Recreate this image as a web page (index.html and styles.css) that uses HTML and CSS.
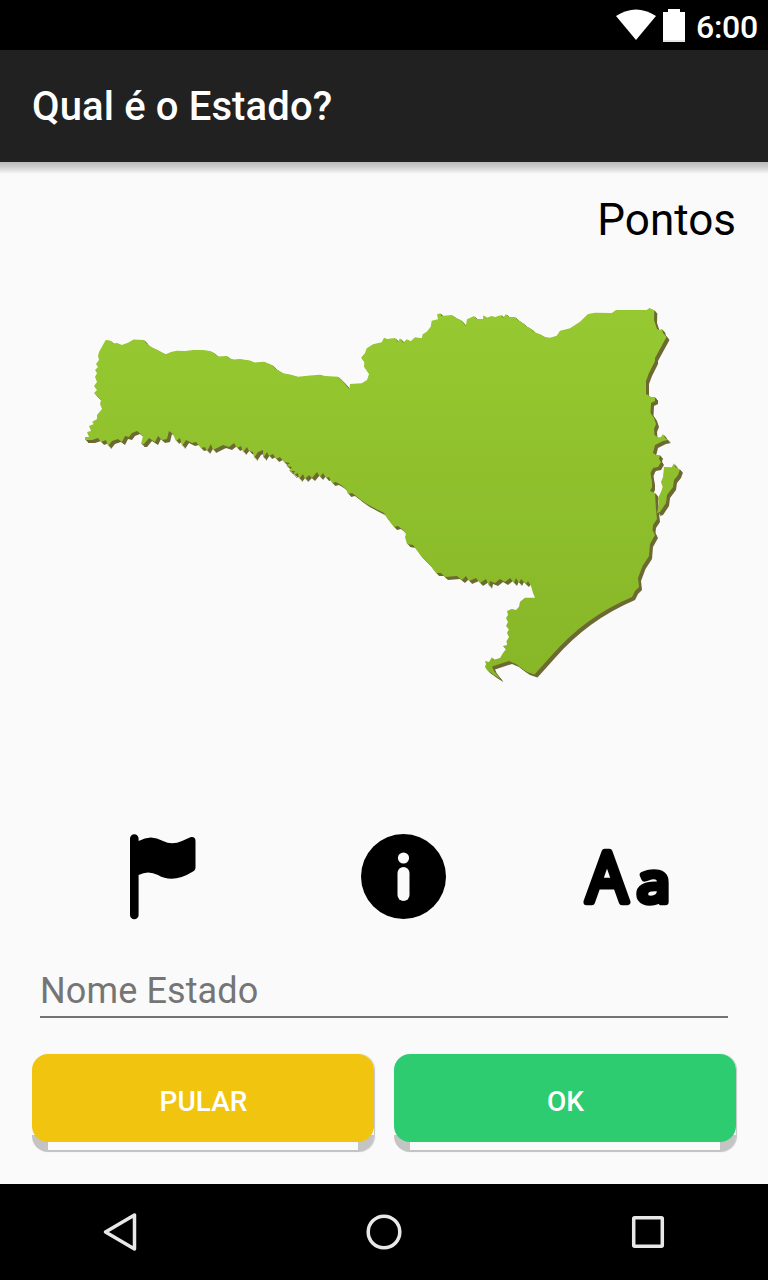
FILE: index.html
```html
<!DOCTYPE html>
<html lang="pt-BR">
<head>
<meta charset="utf-8">
<title>Qual é o Estado?</title>
<link rel="stylesheet" href="styles.css">
</head>
<body>
<div class="status-bar">
  <svg class="wifi" width="40" height="32" viewBox="0 0 40 32"><path fill="#fff" d="M0 7Q20-6 40 7L20 31Z"/></svg>
  <svg class="battery" width="22" height="33" viewBox="0 0 22 33"><path fill="#fff" d="M5 0H17V3H22V33H0V3H5Z"/><path fill="#e4e4e4" d="M0 31H22V33H0Z"/></svg>
  <span class="clock">6:00</span>
</div>
<header class="app-bar"><h1>Qual é o Estado?</h1></header>
<main class="content">
  <div class="score">Pontos</div>
  <svg class="map" width="608" height="380" viewBox="80 304 608 380">
    <defs>
      <linearGradient id="green" gradientUnits="userSpaceOnUse" x1="0" y1="308" x2="0" y2="680">
        <stop offset="0" stop-color="#96c931"/><stop offset="1" stop-color="#87b627"/>
      </linearGradient>
      <g id="state">
        <path d="M105.7 340L110 340.5 113.5 343.5 117 343 121.7 345 128.5 342.5 133.5 339.5 144 340 146 343 150 346.5 158.5 350.5 161 352 165.7 354.3 171 352 176.7 350.7 185 351 193 350 203 350 210 351 214 353 218 356.5 227 356 229 358 233.500 359.500 240 359 250 360.500 254 362.500 264 361.700 267 363 272 365 276 369 283 373.300 290 374.500 298 376.700 310 375.500 320 374.700 325 376 338 376.700 344 382.700 349.300 389.300 350 384 361.700 383.300 367 380 369 374 364 366.700 364.300 361.700 361 357.700 365 353 366.700 348.300 373 344.300 381.700 342.300 384 337.700 387 339 395 338 398 342 400 338.300 403.300 342.700 406.700 339.300 410.700 341.300 415 337.300 421.700 338.300 422.700 334.300 426.700 331.700 430.700 326.700 431.700 320.700 438 319.300 437 314.300 440.700 313.300 441 316 451.700 315 456.700 318.300 460.700 320 465.700 326 467 319.300 474 316 476.700 319 483 319 483.300 315.300 486.700 317.700 491.700 316 495 317 501.700 315 503 318 506 314 509 317 515 317 518 320 523 323.300 526 326 531.700 329.300 534 332 540 334.300 545 337 550 337.700 556.700 335.700 560 330.700 570 328.300 580 321.700 588 314 595 312.700 611.700 313 616 310 646.700 310 649.300 308 654.300 310.300 654 320 657 329 659 330 662 329 663 333 666.500 337 655 358 655 361 649 373 646 381 646 394 651 397 655 397 655 401 651 403 650.500 413 654 418 656 424 654 429 654.500 435 658 437.500 661 437 663 434 665 438 668 440 663 441 655 445 653 453 656 455 660 455 659 459 661 462 658 467 653 468 650.500 473 652 482 652 487 650 491 655 493 656 510 657 519 653 525 652.500 530 655 535 650 544 649 556 642.500 566 638 578 639 587 635 591 632 597Q585 617 552 655L534.500 674.500 527 672 522.500 669 516 664 509 661 492 666.500 494 671 500.700 679.300 494 675 490 672 487 670 485 667 486 664 485 661 489 662 492 657 493 660 500 658 503 653 506 649 502.700 646 507 645 506.500 641 509 637 507 633 509 629 506 626 508 622 506 618 508 615 507 611 511.700 609 516 610 519 606.700 520 601.700 525 597.700 535 597.700 533 593 531 586 528 581 526 584 521 579 519 583 516 578 514 583 510 578 505 582 500 579 495 583 490 581 489 586 486 579 480 583 476 578 469 581 466 576 462 580 457 576 445 577 441 573 436 573 433 569 430 565 424 559 421 556 416.700 550 413 545 407 544 405 537 406 534 403 530 398 526 394 527 387 518 384 513 376 509 366.700 504 361 500 356 496 352 493 348 494 346 489 341 485 336 482 332 483 329 477 326 478 323 473 320 477 317 472 312 478 309 475 305 479 303 474 299 479 298 473 293 475 295 471 289 471 292 467 286 466 290 463 284 462 280 457 276 459 273 454 269 456 267 452 263 458 263 450 258 452 254 458 253 452 249 451 247 447 243 452 241 446 237 448 234 443 229 447 223 445 217 448 213 450 211 444 207 451 205 447 201 448 196 442 192 443 186 440 182 446 180 438 176 441 173 434 169 431 167 439 162 440 158 436 155 442 149 438 144 444 141 444 143 436 137 431 132 433 129 437 125 436 122 442 118 439 112 441 108 446 106 440 101 442 98 438 92 440 85 440 85 437 89 437 87 432 91 431 89 426 94 424 92 422 97 419 97 415 102 409 100 404 101 400 97 396 94 393 97 390 94 386 97 382 95 377 97 373 95 370 98 367 96 364 99 360 98 356 99 352Z"/>
        <path d="M664 467L671.700 467.300 674 463.300 675 467 680 469.500 678 475 674 480 673 487 667 495 666 503 664 506 660 512 657 513 659 504 658 498 661 492 662.700 486.700 661 482 663 477Z"/>
      </g>
    </defs>
    <g fill="#6c6932"><use href="#state" x="1" y="0.700"/><use href="#state" x="2" y="1.700"/><use href="#state" x="3" y="2.900"/></g>
    <path fill="#fafafa" d="M655 472L659 471 662 476 662 482 660 486 656 484 654 479ZM657 488L661 489 659 494Z"/>
    <g fill="url(#green)"><use href="#state"/></g>
  </svg>
  <div class="hints">
    <svg class="flag" width="66" height="86" viewBox="0 0 66 86"><path d="M0 4.500A4.300 4.300 0 0 1 8.600 4.500V7Q21 0 33 7Q42 11.500 52 7L61 3Q65.500 2.500 65.500 7V34Q65.500 36 63 37.500Q43 50 28 41Q18 36 8.600 41V81A4.300 4.300 0 0 1 0 81Z"/></svg>
    <svg class="info" width="86" height="86" viewBox="0 0 86 86"><circle cx="42.500" cy="42.500" r="42.500"/><circle cx="42.500" cy="24" r="5.600" fill="#fafafa"/><rect x="36.500" y="33" width="12" height="34" rx="6" fill="#fafafa"/></svg>
    <svg class="letters" width="106" height="86" viewBox="-10 0 106 86"><text x="3.500" y="67.500" font-size="69" textLength="41" lengthAdjust="spacingAndGlyphs">A</text><text x="54" y="67.500" font-size="55" textLength="33" lengthAdjust="spacingAndGlyphs">a</text></svg>
  </div>
  <input class="name-field" type="text" placeholder="Nome Estado" aria-label="Nome Estado">
  <div class="actions">
    <div class="action"><button class="btn skip">PULAR</button></div>
    <div class="action"><button class="btn ok">OK</button></div>
  </div>
</main>
<nav class="nav-bar">
  <svg width="36" height="40" viewBox="0 0 36 40"><path d="M3.500 20L32.500 3V37Z"/></svg>
  <svg width="36" height="40" viewBox="0 0 36 40"><circle cx="18" cy="20" r="15.800"/></svg>
  <svg width="36" height="40" viewBox="0 0 36 40"><rect x="3.700" y="5.700" width="28.600" height="28.600" rx="1"/></svg>
</nav>
</body>
</html>
```

FILE: styles.css
```css
* { box-sizing: border-box; }
body {
  margin: 0;
  width: 768px;
  height: 1280px;
  display: flex;
  flex-direction: column;
  background: #fafafa;
  font-family: Roboto, sans-serif;
  overflow: hidden;
}
svg { display: block; }
.status-bar {
  height: 50px;
  background: #000;
  display: flex;
  justify-content: flex-end;
  align-items: flex-start;
  padding: 9px 11px 0 0;
}
.battery { margin: 0 11px 0 7px; }
.clock { width: 61px; color: #fff; font-size: 32px; line-height: 37px; font-weight: 500; letter-spacing: -0.3px; }
.app-bar {
  height: 112px;
  background: #212121;
  display: flex;
  align-items: center;
  padding: 2px 0 0 32px;
}
.app-bar h1 { margin: 0; color: #fff; font-size: 40px; line-height: 48px; font-weight: 500; letter-spacing: 0.13px; }
.content {
  flex: 1;
  display: flex;
  flex-direction: column;
  padding: 32px 32px 0;
  background: linear-gradient(#b9b9b9, #cdcdcd 5px, #fafafa 12px);
}
.score { text-align: right; font-size: 44px; line-height: 52px; color: #000; }
.map { margin: 58px 0 0 48px; }
.hints { display: flex; height: 86px; margin-top: 150px; }
.flag { margin-left: 97.5px; }
.info { margin-left: 165px; }
.letters {
  margin-left: 126.5px;
  font-family: "Open Sans", sans-serif;
  font-weight: 400;
  stroke: #000;
  stroke-width: 6.5px;
  stroke-linejoin: round;
}
.name-field {
  height: 64px;
  margin: 34px 8px 0;
  padding: 12px 0 0;
  border: 0;
  border-bottom: 2px solid #737373;
  border-radius: 0;
  background: transparent;
  outline: none;
  font: 36px Roboto, sans-serif;
  letter-spacing: 0.12px;
}
.name-field::placeholder { color: #757575; opacity: 1; }
.actions { display: flex; gap: 20px; margin-top: 36px; }
.action {
  width: 342px;
  height: 98px;
  border-radius: 16px;
  box-shadow: 1px 0 1px #c5c5c5;
  background:
    linear-gradient(#fafafa, #fafafa) 16px 88px / 310px 8px no-repeat,
    linear-gradient(#fafafa 81px, #c4c4c4 81px);
}
.btn {
  display: block;
  width: 342px;
  height: 88px;
  padding: 7px 0 0 1px;
  border: 0;
  border-radius: 16px;
  color: #fff;
  font: 500 28px Roboto, sans-serif;
}
.skip { background: #f1c40f; }
.ok { background: #2ecc71; }
.nav-bar {
  height: 96px;
  background: #000;
  display: flex;
  align-items: center;
  justify-content: space-between;
  padding: 0 102px;
}
.nav-bar svg { fill: none; stroke: #e8e8e8; stroke-width: 3.5px; stroke-linejoin: round; }
```
